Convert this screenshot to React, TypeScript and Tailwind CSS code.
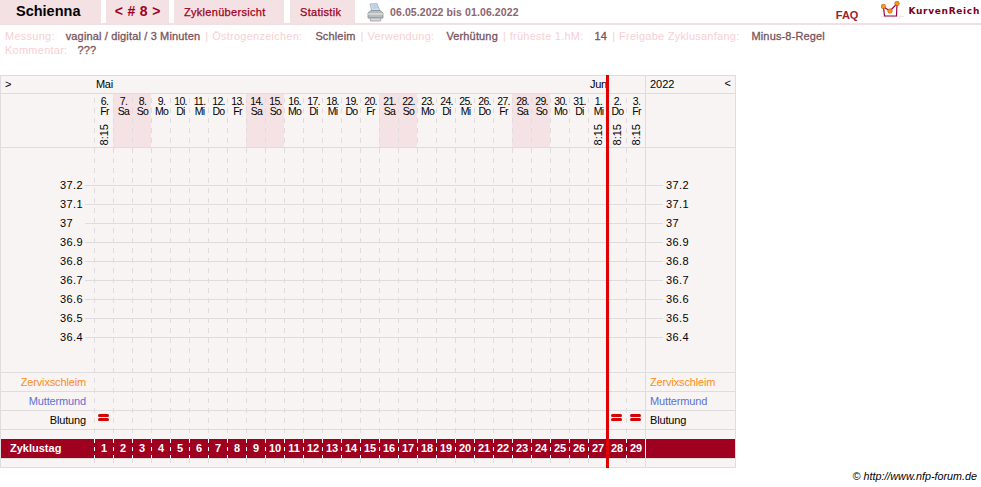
const days = [
  ["6.", "Fr"], ["7.", "Sa"], ["8.", "So"], ["9.", "Mo"], ["10.", "Di"], ["11.", "Mi"], ["12.", "Do"], ["13.", "Fr"],
  ["14.", "Sa"], ["15.", "So"], ["16.", "Mo"], ["17.", "Di"], ["18.", "Mi"], ["19.", "Do"], ["20.", "Fr"],
  ["21.", "Sa"], ["22.", "So"], ["23.", "Mo"], ["24.", "Di"], ["25.", "Mi"], ["26.", "Do"], ["27.", "Fr"],
  ["28.", "Sa"], ["29.", "So"], ["30.", "Mo"], ["31.", "Di"], ["1.", "Mi"], ["2.", "Do"], ["3.", "Fr"],
];
const timed = [0, 26, 27, 28];
const bleeding = [0, 27, 28];
const temps = ["37.2", "37.1", "37", "36.9", "36.8", "36.7", "36.6", "36.5", "36.4"];

function PrinterIcon() {
  return (
    <svg width="17" height="19" viewBox="0 0 17 19">
      <path d="M3 1 L10 0.5 L13 8 L5 9 Z" fill="#cfe0ee" stroke="#8fa4b5" strokeWidth="0.7" />
      <path d="M5 3 L10 2.7 M5.5 5 L11 4.7" stroke="#9db3c4" strokeWidth="0.6" />
      <path d="M1 10 L4 7.5 L13 7.5 L16 10 L16 15 L1 15 Z" fill="#b9bdc0" stroke="#7d8387" strokeWidth="0.7" />
      <path d="M1 11 L16 11" stroke="#eceeef" strokeWidth="1" />
      <path d="M3 15 L14 15 L13.5 18 L3.5 18 Z" fill="#d9dcde" stroke="#8a8f93" strokeWidth="0.7" />
    </svg>
  );
}

function LogoIcon() {
  return (
    <svg width="24" height="20" viewBox="0 0 24 20">
      <path d="M0 15.500 H23 M5 13 V18 M12 13 V18 M19 13 V18" stroke="#e8e4e4" strokeWidth="0.7" />
      <path d="M2.500 6 L3.500 15 H15.500 L16 2.500" fill="none" stroke="#a00040" strokeWidth="1.200" />
      <path d="M2 5.500 L9 10 L16 2.500" fill="none" stroke="#a00040" strokeWidth="1.200" />
      <circle cx="2.400" cy="5.500" r="2.300" fill="#f59a10" stroke="#b04010" strokeWidth="0.5" />
      <circle cx="9" cy="10" r="2.300" fill="#f59a10" stroke="#b04010" strokeWidth="0.5" />
      <circle cx="16" cy="2.500" r="2.300" fill="#f59a10" stroke="#b04010" strokeWidth="0.5" />
    </svg>
  );
}

function Meta({ label, value, gap, sep }: { label: string; value: string; gap: string; sep?: boolean }) {
  return (
    <>
      <span className={`tracking-[0.25px] text-[#f8d0d4] ${gap}`}>{label}</span>
      <span className="tracking-[0.15px] text-[#78545c] [-webkit-text-stroke:0.3px]">{value}</span>
      {sep && <span className="ml-[5px] mr-[4px] text-[#f8d0d4]">|</span>}
    </>
  );
}

function BleedMark() {
  return (
    <div className="flex flex-col gap-px">
      <div className="h-[3px] w-[11px] rounded-full bg-[#d80000]" />
      <div className="h-[3px] w-[11px] rounded-full bg-[#d80000]" />
    </div>
  );
}

function LabelRow({ label, color, children }: { label: string; color: string; children?: React.ReactNode }) {
  return (
    <div className="flex h-[19px] border-b border-[#dedcdc] tracking-[-0.15px]">
      <div className={`flex w-[85px] items-center justify-end pt-px ${color}`}>{label}</div>
      <div className="w-[8px]" />
      <div className="flex w-[551px]">{children}</div>
      <div className={`flex flex-1 items-center pl-[5px] pt-px ${color}`}>{label}</div>
    </div>
  );
}

export default function App() {
  return (
    <div className="h-[487px] w-[981px] overflow-hidden bg-white font-['Liberation_Sans',Arial,sans-serif] text-[11px] text-black">
      <div className="flex h-[25px] items-start border-b-2 border-[#f4e0e3]">
        <div className="flex h-[23px] w-[101px] items-center bg-[#f4e1e3] pl-[16px] text-[14.5px] font-bold">Schienna</div>
        <div className="ml-[5px] flex h-[23px] w-[63px] items-center justify-center bg-[#f4e1e3] text-[14px] font-bold text-[#a00020] [word-spacing:0.7px]">
          &lt; # 8 &gt;
        </div>
        <div className="ml-[5px] flex h-[23px] w-[110px] items-center bg-[#f4e1e3] pl-[10px] pt-px tracking-[0.3px] text-[#a00020] [-webkit-text-stroke:0.25px]">
          Zyklenübersicht
        </div>
        <div className="ml-[6px] flex h-[23px] w-[65px] items-center bg-[#f4e1e3] pl-[10px] pt-px tracking-[0.3px] text-[#a00020] [-webkit-text-stroke:0.25px]">
          Statistik
        </div>
        <div className="ml-[12px] mt-[3px]">
          <PrinterIcon />
        </div>
        <div className="ml-[6px] mt-[5px] text-[10.5px] font-bold tracking-[0.1px] text-[#8c666e]">06.05.2022 bis 01.06.2022</div>
        <div className="ml-auto mt-[7px] font-bold text-[#a02030]">FAQ</div>
        <div className="ml-[23px] mt-px">
          <LogoIcon />
        </div>
        <div className="ml-[3px] mr-px mt-[5px] font-['DejaVu_Sans',sans-serif] text-[9px] font-bold tracking-[0.7px] text-[#800020]">
          KurvenReich
        </div>
      </div>

      <div className="pl-[5px] pt-[4px] leading-[14px]">
        <div className="flex">
          <Meta label="Messung:" value="vaginal / digital / 3 Minuten" gap="mr-[11px]" sep />
          <Meta label="Östrogenzeichen:" value="Schleim" gap="mr-[13px]" sep />
          <Meta label="Verwendung:" value="Verhütung" gap="mr-[12px]" sep />
          <Meta label="früheste 1.hM:" value="14" gap="mr-[11px]" sep />
          <Meta label="Freigabe Zyklusanfang:" value="Minus-8-Regel" gap="mr-[12px]" />
        </div>
        <div className="flex">
          <Meta label="Kommentar:" value="???" gap="mr-[10px]" />
        </div>
      </div>

      <div className="relative mt-[18px] w-[736px] border border-[#dedcdc] bg-[#f9f4f4]">
        <div className="flex h-[18px] items-center border-b border-[#dedcdc]">
          <div className="w-[93px] pl-[4px]">&gt;</div>
          <div className="w-[494px] pl-[2px] tracking-[-0.3px]">Mai</div>
          <div className="w-[57px] pl-[2px] tracking-[-0.3px]">Jun</div>
          <div className="flex h-full flex-1 items-center justify-between border-l border-[#dedcdc] pl-[4px] pr-[4px]">
            <span>2022</span>
            <span className="-mt-[2px]">&lt;</span>
          </div>
        </div>

        <div className="flex h-[54px] border-b border-[#dedcdc]">
          <div className="w-[93px]" />
          {days.map((d, i) => (
            <div
              key={i}
              className={`flex w-[19px] flex-col items-center justify-between pb-[2px] pl-[2px] pt-[2px] text-[10.5px] leading-[10px] tracking-[-0.7px] ${
                i % 7 === 1 || i % 7 === 2 ? "bg-[#f4e2e5]" : ""
              }`}
            >
              <div className="text-center">
                <div>{d[0]}</div>
                <div>{d[1]}</div>
              </div>
              {timed.includes(i) && (
                <div className="rotate-180 text-[11px] leading-[11px] tracking-normal [writing-mode:vertical-rl]">8:15</div>
              )}
            </div>
          ))}
        </div>

        <div className="h-[225px] border-b border-[#dedcdc] pt-[28px]">
          {temps.map((t) => (
            <div key={t} className="flex h-[19px] items-center">
              <div className="w-[84px] pl-[59px] tracking-[0.4px]">{t}</div>
              <div className="h-px w-[578px] bg-[#dedcdc]" />
              <div className="pl-[3px] tracking-[0.4px]">{t}</div>
            </div>
          ))}
        </div>

        <LabelRow label="Zervixschleim" color="text-[#ff8c1a]" />
        <LabelRow label="Muttermund" color="text-[#5a72d2]" />
        <LabelRow label="Blutung" color="text-black">
          {days.map((_, i) => (
            <div key={i} className="flex w-[19px] justify-center pt-[3px]">
              {bleeding.includes(i) && <BleedMark />}
            </div>
          ))}
        </LabelRow>

        <div className="h-[9px]" />

        <div className="relative z-10 h-[20px] border-b border-[#dedcdc]">
          <div className="flex h-[19px] items-center bg-[#a00020] font-bold text-white">
            <div className="w-[93px] pl-[9px]">Zyklustag</div>
            {days.map((_, i) => (
              <div
                key={i}
                className="flex h-full w-[19px] items-center justify-center bg-[linear-gradient(#ffffff_50%,transparent_50%)] bg-[length:1px_8px] bg-repeat-y pl-px"
              >
                {i + 1}
              </div>
            ))}
            <div className="h-full w-px bg-[#f9f4f4]" />
          </div>
        </div>

        <div className="h-[8px]" />

        <div className="pointer-events-none absolute bottom-0 left-[93px] top-[18px] flex border-r border-[#dedcdc]">
          {days.map((_, i) => (
            <div
              key={i}
              className="h-full w-[19px] bg-[linear-gradient(#dedcdc_50%,transparent_50%)] bg-[length:1px_10px] bg-[position:0_4px] bg-repeat-y"
            />
          ))}
        </div>

        <div className="absolute -top-px bottom-[-1px] left-[605px] z-20 w-[3px] bg-[#e00000]" />
      </div>

      <div className="flex justify-end pr-[4px] text-[10.75px] italic">© http://www.nfp-forum.de</div>
    </div>
  );
}
